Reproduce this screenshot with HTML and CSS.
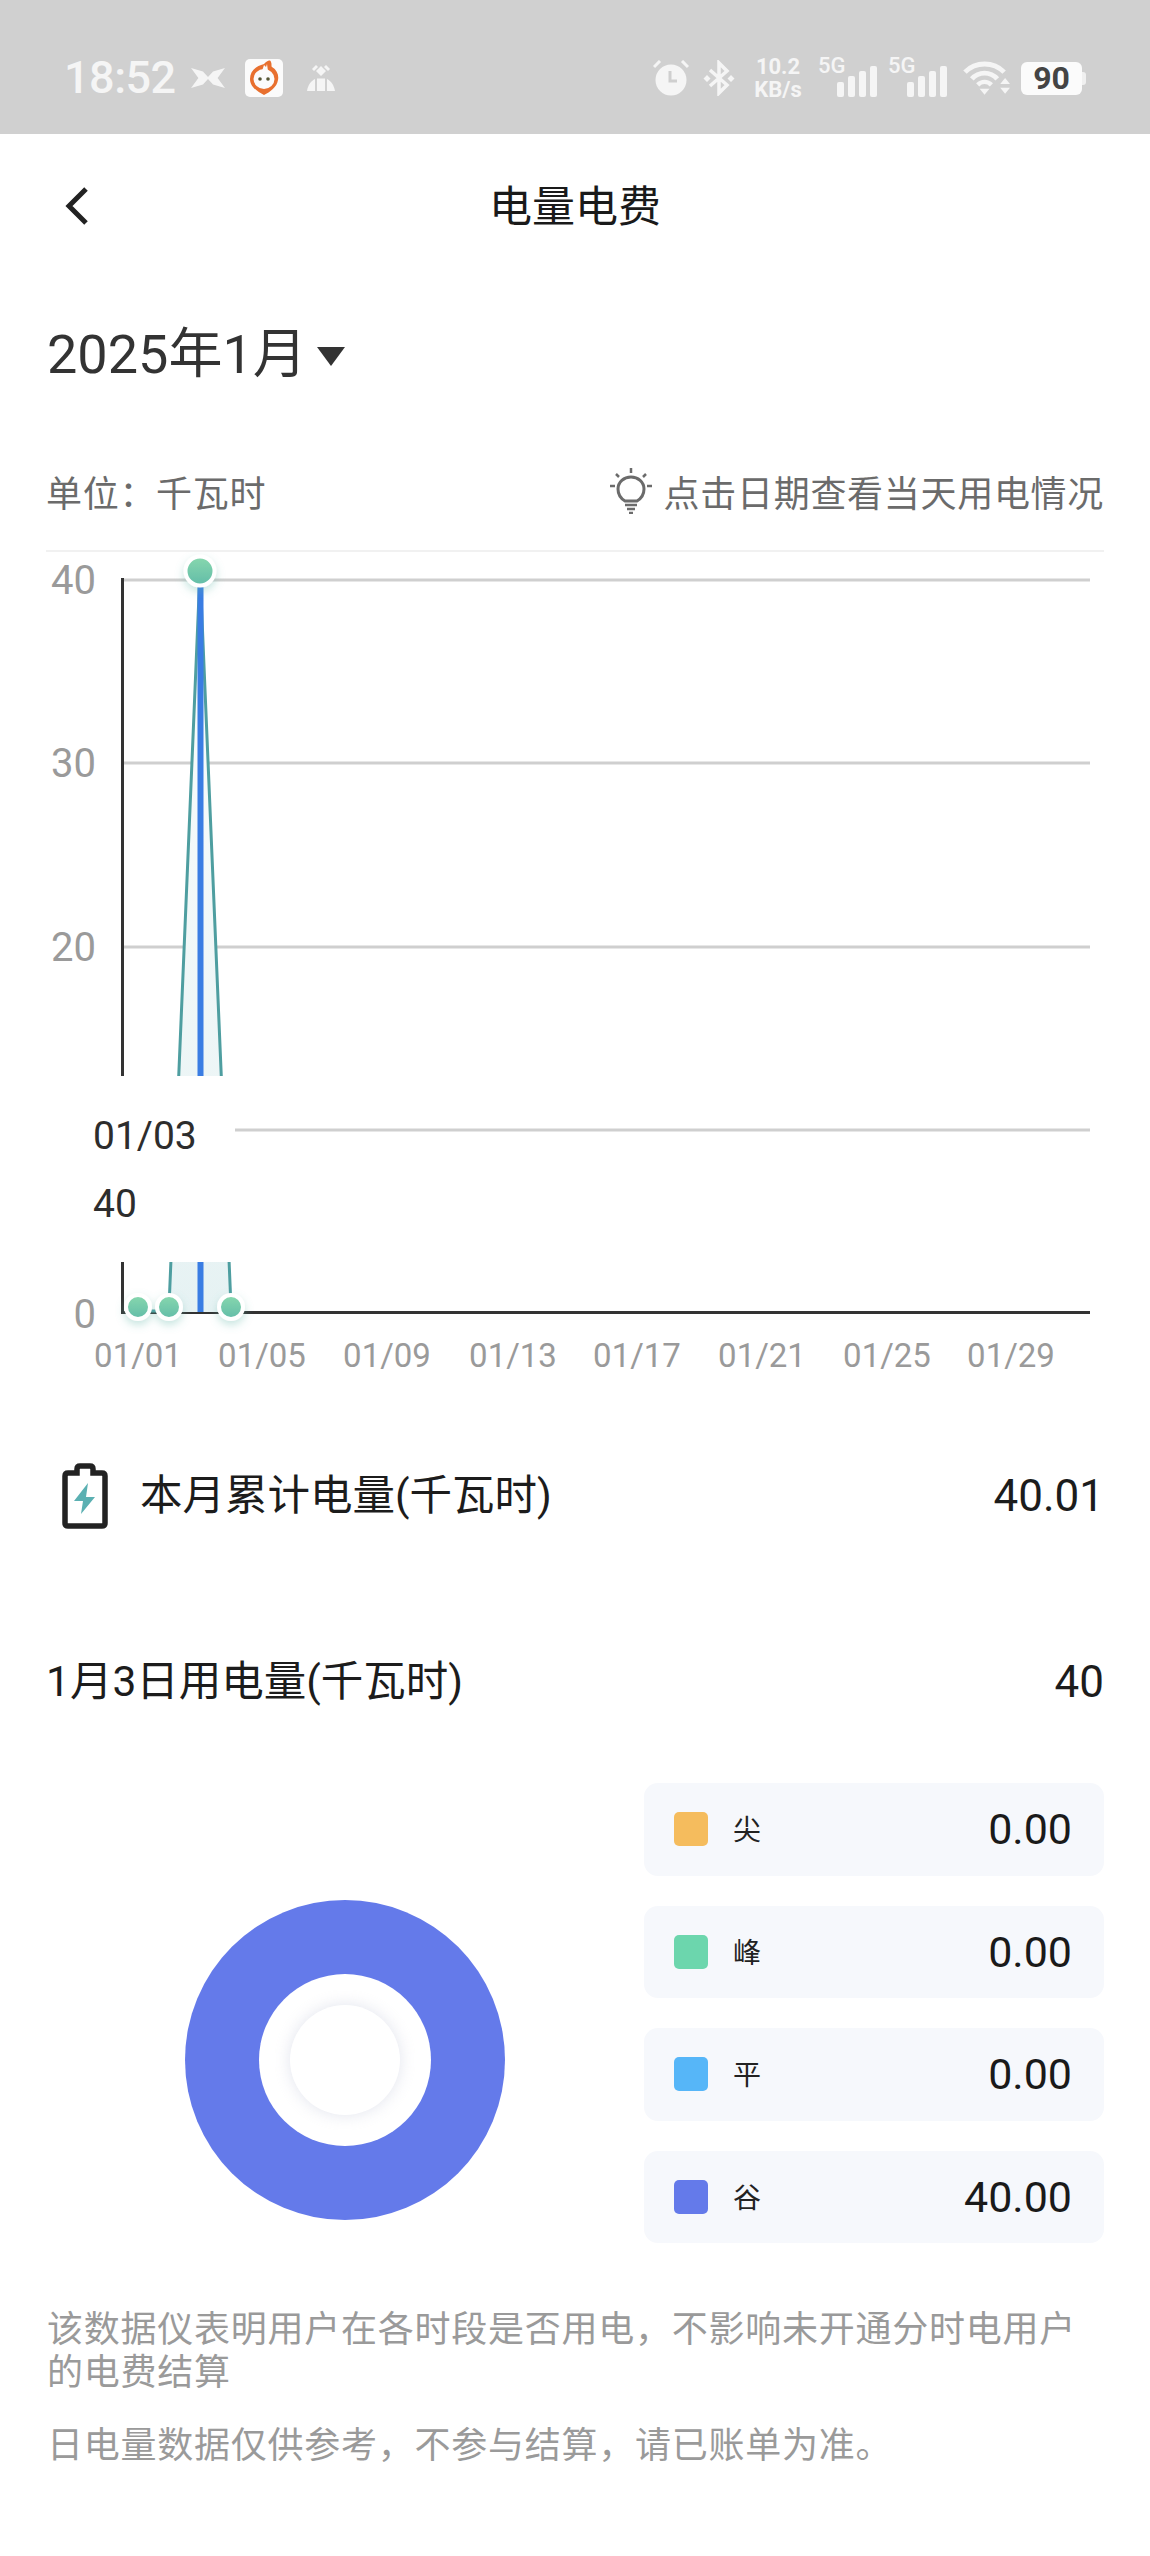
FILE: index.html
```html
<!DOCTYPE html>
<html lang="zh-CN">
<head>
<meta charset="utf-8">
<title>电量电费</title>
<link rel="stylesheet" href="styles.css">
</head>
<body>
<div class="page">
  <div class="statusbar">
    <div class="status-left">
      <span class="time">18:52</span>
      <svg class="ic-x" viewBox="0 0 37 24"><path d="M0 1 L13 5 L18.5 11 L24 5 L37 1 L29 12 L37 23 L24 19 L18.5 13 L13 19 L0 23 L8 12Z" fill="#f5f5f5"/></svg>
      <svg class="ic-app" viewBox="0 0 38 38"><rect width="38" height="38" rx="5" fill="#fbfbfb"/><path d="M19 5 C22 2 25 0 26 3 C27 5 26 7 27 8 C32 11 34 16 33 21 C32 28 25 33 19 36 C13 33 5 28 5 20 C5 12 11 7 19 5Z" fill="#e8702f"/><ellipse cx="19" cy="20" rx="10.500" ry="10" fill="#fbfbfb"/><path d="M17 12 L19 6 L21 8 L22 5 L23 12Z" fill="#fbfbfb"/><circle cx="15" cy="20" r="1.800" fill="#553"/><circle cx="23" cy="20" r="1.800" fill="#553"/></svg>
      <svg class="ic-person" viewBox="0 0 30 28"><path d="M15 2 L20 7 L15 12 L10 7Z M10 1 L12 3 L8 7 L6 5Z M20 1 L18 3 L22 7 L24 5Z" fill="#f5f5f5"/><path d="M1 27 C2 21 5 17 9 15 L9 27Z M11 14.500 H19 V27 H11Z M21 15 C25 17 28 21 29 27 H21Z" fill="#f5f5f5"/></svg>
    </div>
    <div class="status-right">
      <svg class="ic-alarm" viewBox="0 0 36 36"><path d="M1 7 L7 1 M35 7 L29 1" stroke="#f5f5f5" stroke-width="3" fill="none"/><circle cx="18" cy="20" r="15.500" fill="#f5f5f5"/><path d="M17 11 V21 H24" stroke="#cfcfcf" stroke-width="3" fill="none"/></svg>
      <svg class="ic-bt" viewBox="0 0 32 36"><path d="M7 10 L24 25 L16 33 V3 L24 11 L7 26" stroke="#f5f5f5" stroke-width="3.500" fill="none"/><path d="M4 15 L7.500 18.500 L4 22 L0.500 18.500Z M28 15 L31.500 18.500 L28 22 L24.500 18.500Z" fill="#f5f5f5"/></svg>
      <div class="speed"><span>10.2</span><span>KB/s</span></div>
      <div class="sim">
        <span class="sim-label">5G</span>
        <div class="bars"><i class="b1"></i><i class="b2"></i><i class="b3"></i><i class="b4"></i></div>
      </div>
      <div class="sim">
        <span class="sim-label">5G</span>
        <div class="bars"><i class="b1"></i><i class="b2"></i><i class="b3"></i><i class="b4"></i></div>
      </div>
      <svg class="ic-wifi" viewBox="0 0 48 36"><path d="M2 12 C13 1 31 1 42 12" stroke="#f5f5f5" stroke-width="5" fill="none"/><path d="M9 19 C16 11 28 11 35 19" stroke="#f5f5f5" stroke-width="5" fill="none"/><path d="M15 25 C19 21 25 21 29 25" stroke="#f5f5f5" stroke-width="4.500" fill="none"/><path d="M17 29 H27 L22 35Z" fill="#f5f5f5"/><path d="M43 18 L48 24 H38Z M38 28 H48 L43 34Z" fill="#f5f5f5"/></svg>
      <div class="battery"><span class="battery-num">90</span><i class="battery-nub"></i></div>
    </div>
  </div>

  <header class="nav">
    <svg class="back" viewBox="0 0 24 40"><path d="M21 3 L4 20 L21 37" stroke="#222" stroke-width="5" fill="none"/></svg>
    <h1 class="title">电量电费</h1>
  </header>

  <div class="date-row">
    <span class="date">2025年1月</span>
    <i class="caret"></i>
  </div>

  <div class="unit-row">
    <span>单位：千瓦时</span>
    <span class="hint">
      <svg class="bulb" viewBox="0 0 42 46"><path d="M21 0 V5 M6 6 L9 9 M36 6 L33 9 M0 18 H5 M37 18 H42" stroke="#6b6b6b" stroke-width="2.500" fill="none"/><path d="M15 33 C10 30 8 25 8 21 C8 14 14 9 21 9 C28 9 34 14 34 21 C34 25 32 30 27 33 Z" stroke="#6b6b6b" stroke-width="3" fill="none"/><path d="M15 37 H27 M17 41 H25 M19 45 H23" stroke="#6b6b6b" stroke-width="2.500" fill="none"/></svg>
      点击日期查看当天用电情况
    </span>
  </div>

  <div class="chart">
    <svg class="chart-svg" viewBox="0 0 1150 830">
      <defs>
        <linearGradient id="dot" x1="0" y1="0" x2="0" y2="1"><stop offset="0" stop-color="#88d8ae"/><stop offset="1" stop-color="#62bca8"/></linearGradient>
        <linearGradient id="area" x1="0" y1="0" x2="0" y2="1"><stop offset="0" stop-color="#fbfdfd"/><stop offset="1" stop-color="#e6f2f3"/></linearGradient>
        <filter id="soft" x="-60%" y="-60%" width="220%" height="240%"><feDropShadow dx="0" dy="4" stdDeviation="4" flood-color="#5fb5a5" flood-opacity="0.35"/></filter>
      </defs>
      <g class="grid">
        <line x1="122" x2="1090" y1="28" y2="28"/>
        <line x1="122" x2="1090" y1="211" y2="211"/>
        <line x1="122" x2="1090" y1="395" y2="395"/>
        <line x1="122" x2="1090" y1="578" y2="578"/>
      </g>
      <g class="ylab">
        <text x="96" y="42">40</text>
        <text x="96" y="225">30</text>
        <text x="96" y="409">20</text>
        <text x="96" y="776">0</text>
      </g>
      <line class="axis" x1="122.500" x2="122.500" y1="26" y2="762"/>
      <line class="axis" x1="121" x2="1090" y1="760.500" y2="760.500"/>
      <path d="M169 755 L200 19 L231 755 L231 760 L169 760Z" fill="url(#area)"/>
      <path class="spike" d="M138 755 L138 759 L169 759 L169 755 L200 19 L231 755"/>
      <line class="blue" x1="200.500" x2="200.500" y1="26" y2="760"/>
      <g filter="url(#soft)" class="dots">
        <circle cx="200" cy="19" r="14.500"/>
        <circle cx="138" cy="755" r="12"/>
        <circle cx="169" cy="755" r="12"/>
        <circle cx="231" cy="755" r="12"/>
      </g>
      <g class="xlab">
        <text x="138" y="815">01/01</text>
        <text x="262" y="815">01/05</text>
        <text x="387" y="815">01/09</text>
        <text x="513" y="815">01/13</text>
        <text x="637" y="815">01/17</text>
        <text x="762" y="815">01/21</text>
        <text x="887" y="815">01/25</text>
        <text x="1011" y="815">01/29</text>
      </g>
    </svg>
    <div class="tooltip">
      <div>01/03</div>
      <div>40</div>
    </div>
  </div>

  <div class="sum-row sum-month">
    <div class="sum-name">
      <svg class="ic-batt" viewBox="0 0 46 66"><path d="M15 10 V6 C15 4 16 3 18 3 H28 C30 3 31 4 31 6 V10 H40 C42 10 43 11 43 13 V60 C43 62 42 63 40 63 H6 C4 63 3 62 3 60 V13 C3 11 4 10 6 10Z" stroke="#222" stroke-width="5.500" fill="none"/><path d="M26 20 L12 38 H21 L19 51 L33 34 H24Z" fill="#5bb0b2"/></svg>
      本月累计电量(千瓦时)
    </div>
    <span class="sum-val">40.01</span>
  </div>

  <div class="sum-row sum-day">
    <span>1月3日用电量(千瓦时)</span>
    <span class="sum-val">40</span>
  </div>

  <div class="usage">
    <div class="donut"><div class="donut-hole"><div class="donut-core"></div></div></div>
    <div class="legend">
      <div class="legend-row"><i class="sw sw-a"></i><span class="legend-name">尖</span><span class="legend-val">0.00</span></div>
      <div class="legend-row"><i class="sw sw-b"></i><span class="legend-name">峰</span><span class="legend-val">0.00</span></div>
      <div class="legend-row"><i class="sw sw-c"></i><span class="legend-name">平</span><span class="legend-val">0.00</span></div>
      <div class="legend-row"><i class="sw sw-d"></i><span class="legend-name">谷</span><span class="legend-val">40.00</span></div>
    </div>
  </div>

  <div class="notes">
    <p>该数据仪表明用户在各时段是否用电，不影响未开通分时电用户的电费结算</p>
    <p>日电量数据仅供参考，不参与结算，请已账单为准。</p>
  </div>
</div>
</body>
</html>
```

FILE: styles.css
```css
* { box-sizing: border-box; }
html, body { margin: 0; padding: 0; background: #fff; }
.page {
  width: 1150px;
  height: 2556px;
  overflow: hidden;
  font-family: Roboto, "Noto Sans CJK SC", sans-serif;
  color: #222;
}

/* status bar */
.statusbar {
  height: 134px;
  background: #d0d0d0;
  display: flex;
  justify-content: space-between;
  padding: 53px 64px 0 64px;
}
.status-left { display: flex; align-items: center; height: 50px; }
.time { font-size: 45px; line-height: 50px; color: #f5f5f5; font-weight: 500; letter-spacing: -0.5px; width: 126px; }
.ic-x { width: 36px; height: 22px; }
.ic-app { width: 38px; height: 38px; margin-left: 19px; }
.ic-person { width: 30px; height: 28px; margin-left: 23px; }
.status-right { display: flex; align-items: center; height: 50px; }
.ic-alarm { width: 36px; height: 36px; }
.ic-bt { width: 32px; height: 36px; margin-left: 14px; }
.speed {
  width: 50px;
  margin-left: 18px;
  display: flex;
  flex-direction: column;
  align-items: center;
  font-size: 22px;
  line-height: 23px;
  font-weight: 700;
  color: #f5f5f5;
  white-space: nowrap;
}
.sim { position: relative; width: 59px; height: 40px; margin-left: 15px; }
.sim + .sim { margin-left: 11px; }
.sim-label { position: absolute; left: 0; top: -1px; font-size: 22px; line-height: 18px; font-weight: 500; color: #f5f5f5; }
.bars { position: absolute; right: 0; bottom: 1px; display: flex; align-items: flex-end; gap: 4px; }
.bars i { display: block; width: 7px; border-radius: 2px; background: #f5f5f5; }
.bars .b1 { height: 15px; }
.bars .b2 { height: 21px; }
.bars .b3 { height: 26px; }
.bars .b4 { height: 31px; }
.ic-wifi { width: 47px; height: 36px; margin-left: 16px; }
.battery {
  position: relative;
  width: 61px;
  height: 33px;
  margin: 0 4px 0 11px;
  background: #fbfbfb;
  border-radius: 6px;
  display: flex;
  align-items: center;
  justify-content: center;
}
.battery-num { font-size: 32px; font-weight: 700; color: #444; line-height: 33px; }
.battery-nub { position: absolute; right: -4px; top: 10px; width: 4px; height: 13px; background: #f0f0f0; border-radius: 0 3px 3px 0; }

/* nav */
.nav { position: relative; height: 142px; display: flex; align-items: center; justify-content: center; }
.back { position: absolute; left: 65px; top: 52px; width: 24px; height: 40px; }
.title { margin: 0 0 5px 0; font-size: 43px; font-weight: 400; color: #1a1a1a; font-family: "Noto Sans CJK SC", sans-serif; }

/* date */
.date-row { display: flex; align-items: center; gap: 10px; padding-left: 47px; height: 76px; margin-top: 41px; }
.date { font-size: 54px; line-height: 76px; color: #333; }
.caret { width: 0; height: 0; border-left: 14px solid transparent; border-right: 14px solid transparent; border-top: 19px solid #333; margin-top: 3px; }

/* unit */
.unit-row {
  display: flex;
  justify-content: space-between;
  align-items: center;
  margin: 0 46px;
  padding: 60px 0 21px 0;
  height: 159px;
  border-bottom: 2px solid #f1f1f1;
  font-size: 36px;
  color: #6b6b6b;
  letter-spacing: 0.7px;
  font-family: "Noto Sans CJK SC", sans-serif;
}
.hint { display: flex; align-items: center; gap: 12px; }
.bulb { width: 42px; height: 46px; }

/* chart */
.chart { position: relative; height: 830px; }
.chart-svg { display: block; width: 1150px; height: 830px; }
.grid line { stroke: #cfcfcf; stroke-width: 3; }
.axis { stroke: #333; stroke-width: 3; }
.ylab text { font-size: 40px; fill: #9a9a9a; text-anchor: end; font-family: Roboto, sans-serif; }
.xlab text { font-size: 33px; fill: #9a9a9a; text-anchor: middle; font-family: Roboto, sans-serif; }
.spike { fill: none; stroke: #4e9ea0; stroke-width: 3; }
.blue { stroke: #3a7de3; stroke-width: 6; }
.dots circle { fill: url(#dot); stroke: #fff; stroke-width: 4; }
.tooltip {
  position: absolute;
  left: 46px;
  top: 524px;
  width: 189px;
  height: 186px;
  padding: 26px 0 0 47px;
  background: #fff;
  font-size: 39px;
  line-height: 68px;
  color: #2d2d2d;
}

/* summary */
.sum-row { display: flex; justify-content: space-between; align-items: center; margin: 0 46px; font-size: 42.500px; color: #1c1c1c; line-height: 60px; }
.sum-val { font-size: 44px; }
.sum-month { margin-top: 82px; height: 64px; padding-left: 16px; }
.sum-day { margin-top: 124px; height: 60px; }
.sum-name { display: flex; align-items: center; gap: 32px; }
.ic-batt { width: 46px; height: 66px; }

/* usage */
.usage { display: flex; margin: 71px 46px 0 46px; height: 522px; }
.donut {
  width: 320px;
  height: 320px;
  margin: 117px 0 0 139px;
  border-radius: 50%;
  background: #647aea;
  display: flex;
  align-items: center;
  justify-content: center;
}
.donut-hole { width: 172px; height: 172px; border-radius: 50%; background: #fff; display: flex; align-items: center; justify-content: center; }
.donut-core { width: 110px; height: 110px; border-radius: 50%; background: #fff; box-shadow: 0 0 16px rgba(190, 195, 215, 0.45); }
.legend { margin-left: 139px; width: 460px; display: flex; flex-direction: column; gap: 30px; }
.legend-row { height: 92.500px; background: #f6f8fc; border-radius: 14px; display: flex; align-items: center; padding: 0 32px 0 30px; }
.sw { width: 34px; height: 34px; border-radius: 5px; margin-right: 25px; }
.sw-a { background: #f5bc5d; }
.sw-b { background: #6cd6ad; }
.sw-c { background: #56b6f8; }
.sw-d { background: #647aea; }
.legend-name { font-size: 28px; color: #222; font-family: "Noto Sans CJK SC", sans-serif; margin-top: -2px; }
.legend-val { margin-left: auto; font-size: 43px; color: #1a1a1a; }

/* notes */
.notes { margin: 0 46px 0 47px; font-size: 36px; line-height: 43px; color: #9a9a9a; font-family: "Noto Sans CJK SC", sans-serif; letter-spacing: 0.75px; }
.notes p { margin: 0 0 30px 0; }
```
